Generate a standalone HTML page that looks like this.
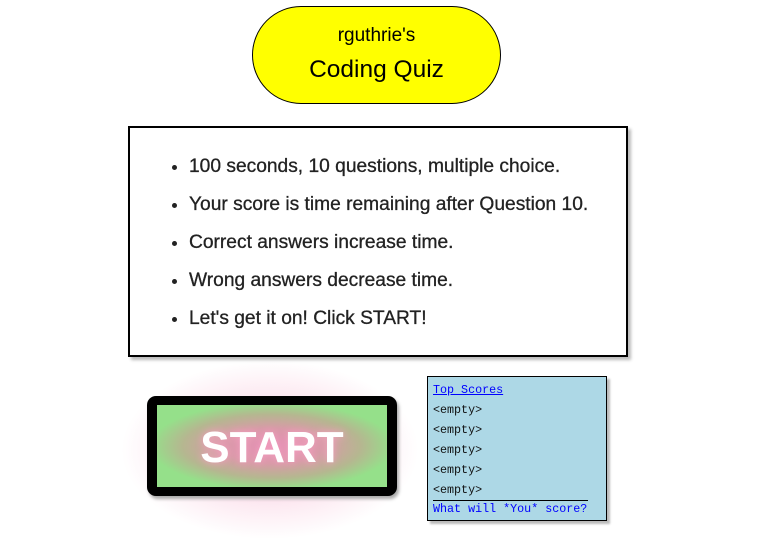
<!DOCTYPE html>
<html><head><style>
body{margin:0;width:760px;height:555px;background:#fff;font-family:"Liberation Sans",sans-serif;position:relative;overflow:hidden}
.pill{position:absolute;left:252px;top:6px;width:247px;height:96px;border:1px solid #000;border-radius:50px;background:#ff0;text-align:center;color:#000}
.pill .a{position:absolute;top:18px;width:100%;font-size:19px}
.pill .b{position:absolute;top:49px;width:100%;font-size:24.5px}
.rules{position:absolute;left:128px;top:126px;width:496px;height:227px;border:2px solid #000;background:#fff;box-shadow:3px 3px 3px #bbb}
.rules ul{margin:0;padding:0;position:absolute;left:59px;top:27px;list-style:disc;font-size:19.2px;color:#222;-webkit-text-stroke:0.3px #222}
.rules li{height:38px;line-height:24px}
.glow{position:absolute;left:120px;top:360px;width:300px;height:180px;background:radial-gradient(ellipse at center,rgba(240,120,170,.45) 0%,rgba(240,120,170,.15) 45%,rgba(255,255,255,0) 70%)}
.btn{position:absolute;left:147px;top:396px;width:250px;height:100px;background:#000;border-radius:9px;box-shadow:2px 3px 3px #aaa}
.inner{position:absolute;left:10px;top:9px;width:230px;height:82px;background:radial-gradient(ellipse at center,#e48fb4 0%,#d99aa8 30%,#b5b790 55%,#95e08a 75%);}
.inner span{position:absolute;width:100%;text-align:center;top:18px;font-size:44px;font-weight:bold;color:#fff;text-shadow:0 0 8px #f5a0c0}
.scores{position:absolute;left:427px;top:376px;width:178px;height:143px;border:1px solid #000;background:#add8e6;box-shadow:3px 3px 2px #bbb;font-family:"Liberation Mono",monospace;font-size:11.7px;color:#111}
.scores div{position:absolute;left:5px}
a{color:#00f}
</style></head><body>
<div class="pill"><div class="a">rguthrie's</div><div class="b">Coding Quiz</div></div>
<div class="rules"><ul>
<li>100 seconds, 10 questions, multiple choice.</li>
<li>Your score is time remaining after Question 10.</li>
<li>Correct answers increase time.</li>
<li>Wrong answers decrease time.</li>
<li>Let's get it on! Click START!</li>
</ul></div>
<div class="glow"></div>
<div class="btn"><div class="inner"><span>START</span></div></div>
<div class="scores">
<div style="top:6px"><a href="#" style="text-decoration:underline">Top Scores</a></div>
<div style="top:26px">&lt;empty&gt;</div>
<div style="top:46px">&lt;empty&gt;</div>
<div style="top:66px">&lt;empty&gt;</div>
<div style="top:86px">&lt;empty&gt;</div>
<div style="top:106px">&lt;empty&gt;</div>
<div style="top:123px;width:155px;border-top:1px solid #000;color:#00f;padding-top:1px">What will *You* score?</div>
</div>
</body></html>
